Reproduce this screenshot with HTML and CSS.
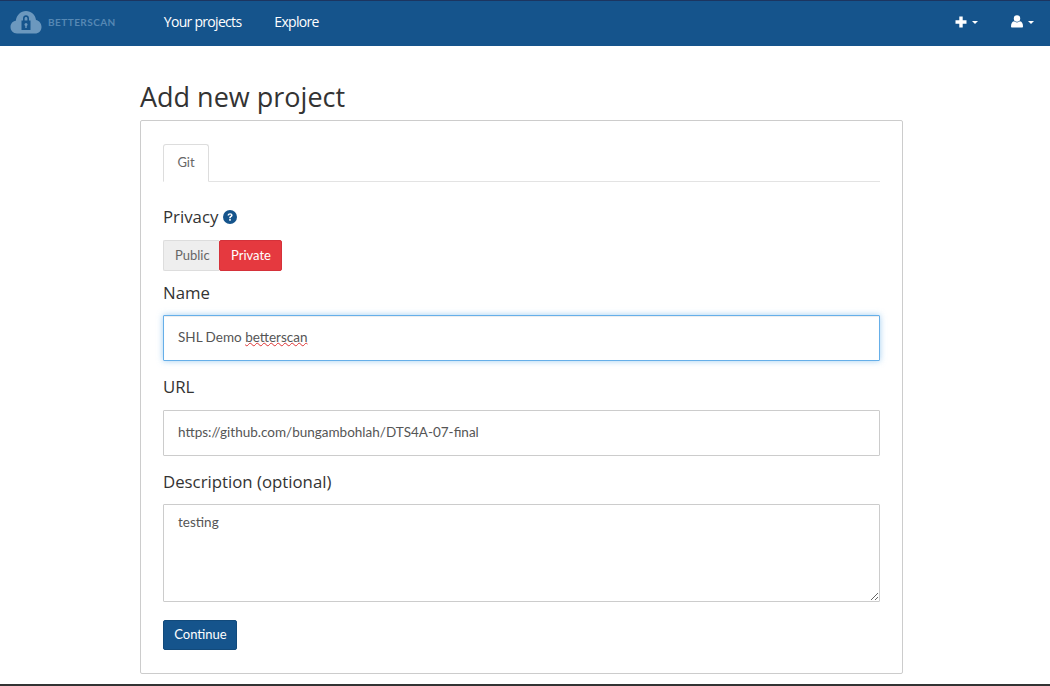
FILE: index.html
```html
<!DOCTYPE html>
<html lang="en">
<head>
<meta charset="utf-8">
<title>Add new project</title>
<link rel="stylesheet" href="styles.css">
</head>
<body>
<nav class="navbar">
  <a class="brand">
    <svg class="brand-icon" width="32" height="24" viewBox="0 0 32 24">
      <path class="cloud" d="M7 23.500C3 23.500 0.500 20.500 0.500 17C0.500 13.800 2.700 11.300 5.800 10.800C6.500 5 10.800 1 16 1C21.200 1 25.300 4.700 26 10C29.300 10.700 31.500 13.500 31.500 17C31.500 20.800 28.800 23.500 25 23.500Z"/>
      <path class="lock" d="M11.500 10.500H13V8.500C13 6.500 14.300 5.300 16 5.300C17.700 5.300 19 6.500 19 8.500V10.500H20.500V20H11.500ZM14.600 10.500H17.400V8.500C17.400 7.500 16.900 6.900 16 6.900C15.100 6.900 14.600 7.500 14.600 8.500Z"/>
      <circle class="cloud" cx="16" cy="14.500" r="1.500"/>
      <rect class="cloud" x="15.300" y="15" width="1.400" height="3"/>
    </svg>
    <span class="brand-name">BETTERSCAN</span>
  </a>
  <a class="nav-link first">Your projects</a>
  <a class="nav-link">Explore</a>
  <div class="nav-right">
    <span class="nav-icon">
      <svg width="12" height="12" viewBox="0 0 12 12"><path class="white" d="M4.300 0.500H7.700V4.300H11.500V7.700H7.700V11.500H4.300V7.700H0.500V4.300H4.300Z"/></svg>
      <i class="caret"></i>
    </span>
    <span class="nav-icon">
      <svg width="12" height="13" viewBox="0 0 12 13"><circle class="white" cx="6" cy="3.500" r="3.200"/><path class="white" d="M0.800 12.500C0.300 12.500 0 12.200 0 11.500C0 8.800 1 6.700 3 6.300C3.800 7 4.800 7.400 6 7.400C7.200 7.400 8.200 7 9 6.300C11 6.700 12 8.800 12 11.500C12 12.200 11.700 12.500 11.200 12.500Z"/></svg>
      <i class="caret"></i>
    </span>
  </div>
</nav>
<main class="container">
  <h1 class="title">Add new project</h1>
  <section class="panel">
    <div class="tabs"><span class="tab">Git</span></div>
    <div class="label privacy-label">Privacy
      <svg class="help" width="14" height="14" viewBox="0 0 14 14"><circle class="help-bg" cx="7" cy="7" r="7"/><path class="help-mark" d="M4.500 5.400C4.700 4 5.700 3.200 7.100 3.200C8.500 3.200 9.600 4.100 9.600 5.300C9.600 6.200 9.100 6.700 8.400 7.100C7.900 7.400 7.800 7.600 7.800 8.200H6.200C6.200 7.100 6.500 6.600 7.300 6.100C7.800 5.800 8 5.600 8 5.300C8 4.900 7.600 4.600 7.100 4.600C6.500 4.600 6.200 4.900 6 5.600ZM6.200 9H7.800V10.700H6.200Z"/></svg>
    </div>
    <div class="btn-group">
      <span class="btn btn-public">Public</span>
      <span class="btn btn-private">Private</span>
    </div>
    <div class="label name-label">Name</div>
    <div class="input focused">SHL Demo <span class="misspelled">betterscan</span></div>
    <div class="label field-label">URL</div>
    <div class="input url-input">https://github.com/bungambohlah/DTS4A-07-final</div>
    <div class="label field-label">Description (optional)</div>
    <textarea class="textarea" spellcheck="false">testing</textarea>
    <button class="btn btn-continue" type="button">Continue</button>
  </section>
</main>
<div class="bottom-line"></div>
</body>
</html>
```
FILE: styles.css
```css
* { box-sizing: border-box; }
html, body { height: 100%; }
body {
  margin: 0;
  height: 686px;
  overflow: hidden;
  display: flex;
  flex-direction: column;
  background: #fff;
  font-family: Lato, "Liberation Sans", sans-serif;
  font-size: 14px;
  color: #555;
}
.navbar {
  height: 46px;
  flex: none;
  display: flex;
  align-items: center;
  padding: 0 10px 4px;
  background: #15548c;
  border-top: 1px solid #1c3560;
}
.brand { display: flex; align-items: center; gap: 6px; }
.brand-icon { display: block; }
.cloud { fill: #6c98be; }
.lock { fill: #15548c; }
.brand-name {
  font-size: 10px;
  font-weight: 700;
  letter-spacing: 0.45px;
  color: #5688b4;
}
.nav-link {
  font-family: "Open Sans", sans-serif;
  font-size: 14px;
  letter-spacing: -0.7px;
  color: #fff;
  margin-left: 33px;
}
.nav-link.first { margin-left: 48px; }
.nav-right { margin-left: auto; display: flex; gap: 33px; padding-right: 6px; }
.nav-icon { display: flex; align-items: center; gap: 5px; }
.white { fill: #fff; }
.caret {
  display: block;
  margin-top: 1px;
  border-top: 3px solid #fff;
  border-left: 3px solid transparent;
  border-right: 3px solid transparent;
}
.container { width: 763px; margin-left: 140px; flex: none; }
.title {
  margin: 0;
  height: 74px;
  padding-top: 33px;
  font-family: "Open Sans", sans-serif;
  font-size: 27px;
  font-weight: 400;
  line-height: 36px;
  color: #333;
}
.panel {
  height: 554px;
  padding: 23px 22px;
  border: 1px solid #ccc;
  border-radius: 2px;
  display: flex;
  flex-direction: column;
  align-items: flex-start;
}
.tabs { width: 100%; height: 38px; border-bottom: 1px solid #e3e3e3; flex: none; }
.tab {
  display: block;
  width: 46px;
  height: 38px;
  border: 1px solid #ddd;
  border-bottom-color: #fff;
  border-radius: 3px 3px 0 0;
  text-align: center;
  line-height: 34px;
  font-size: 13px;
  color: #666;
}
.label {
  font-family: "Open Sans", sans-serif;
  font-size: 16.8px;
  line-height: 22px;
  color: #333;
}
.privacy-label { margin-top: 24px; display: flex; align-items: center; gap: 5px; height: 22px; }
.help-bg { fill: #15548c; }
.help-mark { fill: #fff; }
.btn-group { display: flex; margin-top: 12px; }
.btn {
  display: block;
  font-size: 13px;
  line-height: 28px;
  border-radius: 2px;
}
.btn-public {
  width: 56px;
  height: 31px;
  padding-left: 11px;
  background: #eee;
  border: 1px solid #ddd;
  border-right: 0;
  border-radius: 2px 0 0 2px;
  color: #666;
}
.btn-private {
  width: 63px;
  height: 31px;
  padding-left: 1px;
  text-align: center;
  background: #e5393f;
  border: 1px solid #d5323a;
  color: #fff;
}
.name-label { margin-top: 11px; }
.input {
  width: 717px;
  height: 46px;
  flex: none;
  margin-top: 11px;
  padding: 0 14px;
  border: 1px solid #ccc;
  border-radius: 1px;
  line-height: 42px;
  font-size: 13.5px;
  color: #555;
  background: #fff;
}
.url-input { margin-top: 12px; }
.focused {
  border-color: #66afe9;
  box-shadow: inset 0 1px 1px rgba(0,0,0,.075), 0 0 6px rgba(102,175,233,.6);
}
.misspelled { text-decoration: underline wavy #d33; text-decoration-thickness: 1px; text-underline-offset: 0; }
.field-label { margin-top: 15px; }
.textarea {
  display: block;
  width: 717px;
  height: 98px;
  flex: none;
  margin: 11px 0 0;
  padding: 8px 14px;
  border: 1px solid #ccc;
  border-radius: 1px;
  font-family: Lato, sans-serif;
  font-size: 13.5px;
  line-height: 18px;
  color: #555;
  outline: 0;
}
.btn-continue {
  margin-top: 18px;
  width: 74px;
  height: 30px;
  padding: 0 0 2px 1px;
  line-height: 26px;
  background: #15548c;
  border: 1px solid #124a7b;
  color: #fff;
  font-family: Lato, sans-serif;
}
.bottom-line { margin-top: auto; height: 2px; flex: none; background: #333; }
```
